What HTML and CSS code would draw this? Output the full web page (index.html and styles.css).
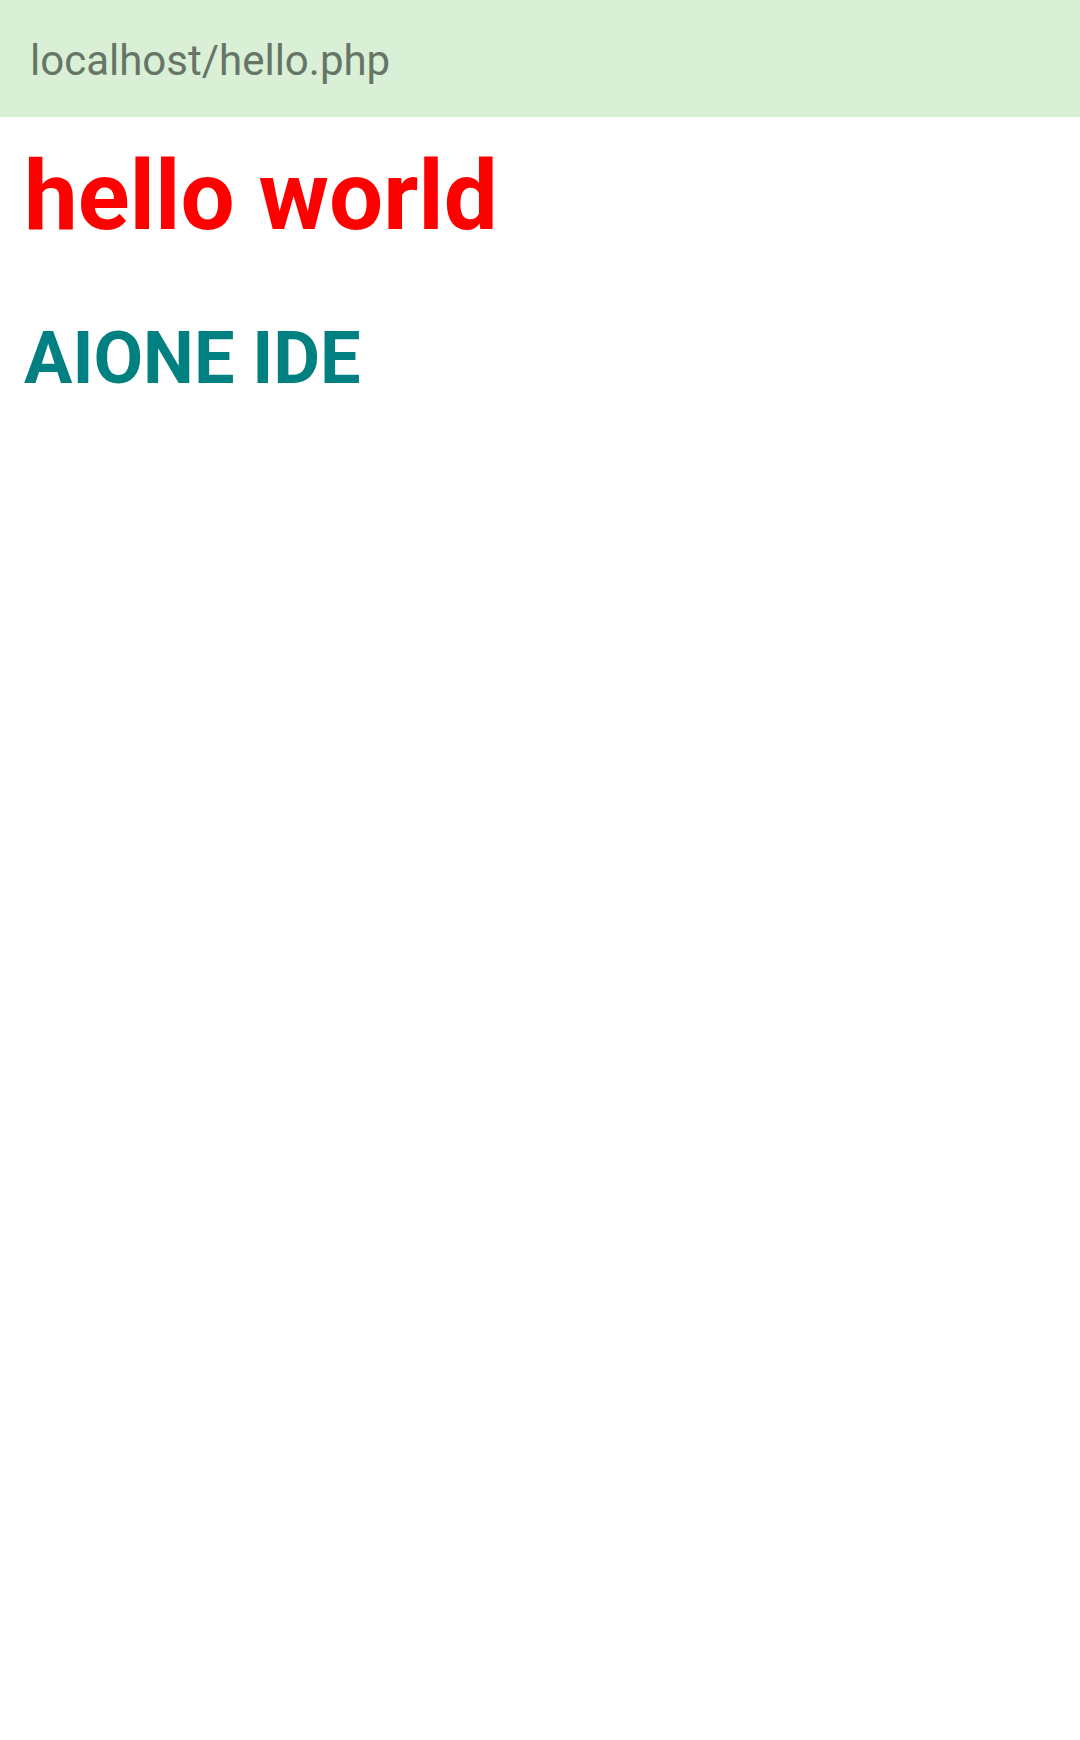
FILE: index.html
```html
<!DOCTYPE html>
<html>
<head>
<meta charset="utf-8">
<link rel="stylesheet" href="styles.css">
</head>
<body>
<div class="urlbar"><span class="url">localhost/hello.php</span></div>
<main class="content">
<h1 class="title">hello world</h1>
<h2 class="subtitle">AIONE IDE</h2>
</main>
</body>
</html>
```
FILE: styles.css
```css
html, body {
  margin: 0;
  padding: 0;
  background: #ffffff;
  font-family: Roboto, "Noto Sans", sans-serif;
}
.urlbar {
  height: 117px;
  background: #d9f0d7;
  display: flex;
  align-items: center;
  padding: 0 30px;
  box-sizing: border-box;
}
.url {
  font-size: 42px;
  color: #667566;
  line-height: 1;
  margin-top: 5px;
}
.content {
  padding: 23px 24px 0;
}
.title {
  margin: 0 0 64px;
  font-size: 96px;
  font-weight: 700;
  color: #ff0000;
}
.subtitle {
  margin: 0;
  font-size: 72px;
  font-weight: 700;
  color: #008080;
}
```
